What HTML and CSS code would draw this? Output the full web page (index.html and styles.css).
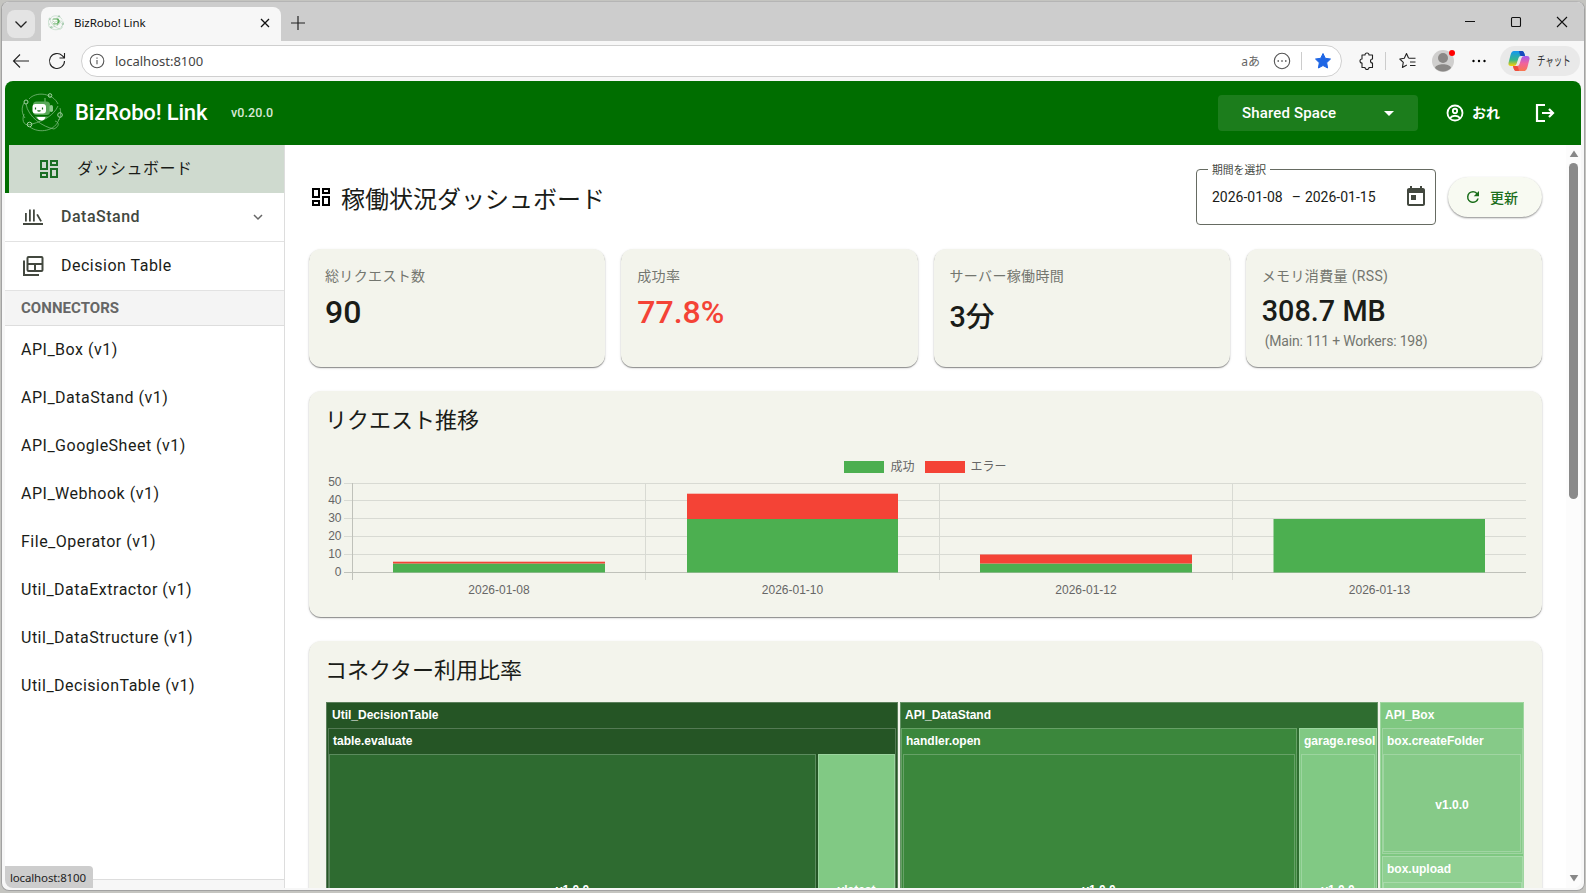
FILE: index.html
```html
<!DOCTYPE html>
<html lang="ja">
<head>
  <meta charset="UTF-8" />
  <meta name="viewport" content="width=device-width, initial-scale=1.0"/>
  <title>BizRobo! Link</title>
  <link rel="stylesheet" href="styles.css">
</head>

<body>

<!-- Shared icon shapes -->
<svg class="defs" width="0" height="0">
  <symbol id="i-dash" viewBox="0 0 24 24"><path d="M19 5v2h-4V5h4M9 5v6H5V5h4m10 8v6h-4v-6h4M9 17v2H5v-2h4M21 3h-8v6h8V3zM11 3H3v10h8V3zm10 8h-8v10h8V11zm-10 4H3v6h8v-6z"/></symbol>
  <symbol id="i-robot" viewBox="0 0 42 42">
    <g fill="none" stroke="currentColor" stroke-width=".8" opacity=".75">
      <path d="M8 7C15-1 32 1 37 12M38 27C35 39 18 42 9 35M3 11C0 16 1 22 4 26"/>
      <path d="M5 12C7 25 22 35 33 37c6-3 5-7 1-8M3 22c-3 8 1 13 8 10 12-3 22-9 26-18"/>
      <path d="M39 16c1 3 1 8-1 12"/>
    </g>
    <g fill="none" stroke="currentColor" stroke-width="1">
      <circle cx="29" cy="3.500" r="1.800"/><circle cx="5" cy="10" r="2"/><circle cx="39" cy="23" r="2.300"/><circle cx="8.500" cy="32.500" r="2.300"/>
    </g>
    <path d="M24 6v5" stroke="#7fbf7f" stroke-width="1"/>
    <rect x="12" y="9.500" width="17" height="13.500" rx="3.500" fill="#58a858"/>
    <rect x="28.500" y="13" width="3.500" height="7" rx="1.700" fill="#8cc78c"/>
    <rect x="11.500" y="12" width="13.500" height="9.500" rx="3" fill="#fff"/>
    <path d="M14.500 15.500v2M21.500 15.500v2M16.500 18.500q1.500 1.200 3 0" stroke="#176817" stroke-width="1.200" fill="none"/>
    <path d="M14 24.500h13l-2 2.500H16z" fill="#58a858"/>
    <path d="M16 25h8.500q-1 3.500-4.200 3.500T16 25z" fill="#fff"/>
  </symbol>
</svg>

<div class="window">

  <!-- Tab strip -->
  <div class="tabstrip">
    <button class="tab-menu"><svg width="14" height="14" viewBox="0 0 14 14"><path d="M1.500 4.500 7 10l5.500-5.500"/></svg></button>
    <div class="tab">
      <svg class="favicon" width="16" height="16"><use href="#i-robot"/></svg>
      <span class="tab-title">BizRobo! Link</span>
      <svg class="line" width="10" height="10" viewBox="0 0 10 10"><path d="M1 1l8 8M9 1L1 9"/></svg>
    </div>
    <svg class="line new-tab" width="14" height="14" viewBox="0 0 14 14"><path d="M7 0v14M0 7h14"/></svg>
    <div class="win-buttons">
      <svg class="line" width="12" height="12" viewBox="0 0 12 12"><path d="M1 5.500h10"/></svg>
      <svg class="line" width="12" height="12" viewBox="0 0 12 12"><rect x="1.500" y="1.500" width="9" height="9" rx="1"/></svg>
      <svg class="line" width="12" height="12" viewBox="0 0 12 12"><path d="M1 1l10 10M11 1L1 11"/></svg>
    </div>
  </div>

  <!-- Address bar -->
  <div class="toolbar">
    <svg class="line" width="18" height="16" viewBox="0 0 18 16"><path d="M17 8H1.500M8 1.500 1.500 8 8 14.500"/></svg>
    <svg class="line reload" width="18" height="18" viewBox="0 0 18 18"><path d="M16.500 9A7.500 7.500 0 1 1 14.200 3.600L16 5.300M16.500 1v5h-5"/></svg>
    <div class="address">
      <svg class="line info" width="16" height="16" viewBox="0 0 16 16"><circle cx="8" cy="8" r="6.800"/><path d="M8 7v4.300M8 4.500v1.300"/></svg>
      <span class="url">localhost:8100</span>
      <span class="translate">aあ</span>
      <svg class="line more" width="18" height="18" viewBox="0 0 18 18"><circle cx="9" cy="9" r="7.700"/><path d="M4.500 9h1.500M8.250 9h1.500M12 9h1.500" stroke-width="1.500"/></svg>
      <span class="bar"></span>
      <svg width="18" height="18" viewBox="0 0 18 18"><path d="M9 1.500l2.300 4.800 5.200.7-3.800 3.700.9 5.300L9 13.500 4.400 16l.9-5.300L1.500 7l5.200-.7z" fill="#1f66e5" stroke="#1f66e5" stroke-linejoin="round"/></svg>
    </div>
    <svg class="line ext" width="18" height="18" viewBox="0 0 18 18"><path d="M4 3h3a2 2 0 0 1 4 0h3.500v4a1.800 1.800 0 1 0 0 4v4.500H11a2 2 0 0 1-4 0H4V11a2 2 0 0 1 0-4z" stroke-linejoin="round"/></svg>
    <span class="bar"></span>
    <svg class="line fav" width="18" height="18" viewBox="0 0 18 18"><path d="M9.500 6 7.500 1.500 5.300 6.300.8 7l3.500 3.400-.9 5 4.400-2.300M9.500 6.300h7M11 10h5.500M11 13.500h5.500" stroke-linejoin="round"/></svg>
    <div class="avatar">
      <svg width="22" height="22" viewBox="0 0 22 22"><circle cx="11" cy="11" r="11" fill="#d0cfce"/><circle cx="11" cy="8" r="5" fill="#8a8886"/><path d="M3 18c1-5 15-5 16 0a11 11 0 0 1-16 0z" fill="#8a8886"/></svg>
      <span class="dot"></span>
    </div>
    <svg class="dots" width="14" height="4" viewBox="0 0 14 4"><circle cx="1.500" cy="2" r="1.200"/><circle cx="7" cy="2" r="1.200"/><circle cx="12.500" cy="2" r="1.200"/></svg>
    <div class="chat">
      <svg width="22" height="22" viewBox="0 0 22 22">
        <defs>
          <linearGradient id="g1" x1="0" y1="0" x2="0" y2="1"><stop offset="0" stop-color="#1597f2"/><stop offset=".6" stop-color="#36b78a"/><stop offset="1" stop-color="#ffd000"/></linearGradient>
          <linearGradient id="g2" x1="0" y1="0" x2="0" y2="1"><stop offset="0" stop-color="#a55bf0"/><stop offset=".5" stop-color="#f1649b"/><stop offset="1" stop-color="#f9774f"/></linearGradient>
        </defs>
        <path d="M6 1h8q2 0 3 5h-4q-2 0-2.500 2l-2 6q-.5 2-3 2H3q-3 0-2.500-3l2-8Q3.500 1 6 1z" fill="url(#g1)"/>
        <path d="M11 1h3q2 0 3 5h-4q-1 0-2-5z" fill="#1749bd"/>
        <path d="M16 21H8q-2 0-3-5h4q2 0 2.500-2l2-6q.5-2 3-2H19q3 0 2.500 3l-2 8q-1 4-3.500 4z" fill="url(#g2)"/>
        <path d="M11 21H8q-2 0-3-5h4q1 0 2 5z" fill="#ee4d3d"/>
      </svg>
      <span>チャット</span>
    </div>
  </div>

  <!-- Web page -->
  <div class="page">
    <header class="app-header">
      <svg class="logo" width="42" height="42"><use href="#i-robot"/></svg>
      <span class="app-name">BizRobo! Link</span>
      <span class="version">v0.20.0</span>
      <button class="space"><span>Shared Space</span><svg width="10" height="5" viewBox="0 0 10 5"><path d="M0 0h10L5 5z" fill="#fff"/></svg></button>
      <svg class="account" width="20" height="20" viewBox="0 0 24 24" fill="none" stroke="#fff" stroke-width="2.200"><circle cx="12" cy="12" r="9"/><circle cx="12" cy="9.500" r="2.600"/><path d="M5.800 18.300c3-4 9.400-4 12.400 0"/></svg>
      <span class="user">おれ</span>
      <svg class="logout" width="24" height="24" viewBox="0 0 24 24" fill="none" stroke="#fff" stroke-width="2.200"><path d="M12 4H4v16h8M9 12h11M16 8l4 4-4 4"/></svg>
    </header>

    <div class="body">
      <nav class="sidebar">
        <a class="item active"><svg width="24" height="24"><use href="#i-dash"/></svg><span>ダッシュボード</span></a>
        <a class="item parent">
          <svg width="24" height="24" viewBox="0 0 24 24"><path d="M2 18h20v2H2zM4 8h1.800v8.500H4zM8 4.500h1.800v12H8zM12 4.500h1.800v12H12zM15.300 9.800l1.600-.8 4 7-1.600.8z"/></svg>
          <span>DataStand</span>
          <svg class="chevron" width="12" height="12" viewBox="0 0 12 12"><path d="M2 4l4 4 4-4"/></svg>
        </a>
        <a class="item">
          <svg class="outline" width="24" height="24" viewBox="0 0 24 24"><rect x="6.500" y="3" width="15" height="14" rx="1"/><path d="M6.500 10h15M14 10v7M3 6.500V21h15"/></svg>
          <span>Decision Table</span>
        </a>
        <div class="group-title">CONNECTORS</div>
        <a class="connector">API_Box (v1)</a>
        <a class="connector">API_DataStand (v1)</a>
        <a class="connector">API_GoogleSheet (v1)</a>
        <a class="connector">API_Webhook (v1)</a>
        <a class="connector">File_Operator (v1)</a>
        <a class="connector">Util_DataExtractor (v1)</a>
        <a class="connector">Util_DataStructure (v1)</a>
        <a class="connector">Util_DecisionTable (v1)</a>
        <div class="side-foot"></div>
      </nav>

      <main>
        <div class="title-row">
          <svg width="24" height="24"><use href="#i-dash"/></svg>
          <h1>稼働状況ダッシュボード</h1>
          <div class="date-field">
            <span class="date-label">期間を選択</span>
            <span class="from">2026-01-08</span><span class="dash">–</span><span>2026-01-15</span>
            <svg width="24" height="24" viewBox="0 0 24 24"><path d="M19 4h-1V2h-2v2H8V2H6v2H5c-1.100 0-2 .9-2 2v14c0 1.100.9 2 2 2h14c1.100 0 2-.9 2-2V6c0-1.100-.9-2-2-2zm0 16H5V9h14v11zM7 11h5v5H7z"/></svg>
          </div>
          <button class="refresh">
            <svg width="18" height="18" viewBox="0 0 24 24"><path d="M17.650 6.350A7.960 7.960 0 0 0 12 4a8 8 0 1 0 7.730 10h-2.080A6 6 0 1 1 12 6c1.660 0 3.140.69 4.220 1.780L13 11h7V4l-2.350 2.350z"/></svg>更新
          </button>
        </div>

        <section class="cards">
          <div class="card"><p class="label">総リクエスト数</p><p class="value big">90</p></div>
          <div class="card"><p class="label">成功率</p><p class="value big bad">77.8%</p></div>
          <div class="card"><p class="label">サーバー稼働時間</p><p class="value jp">3分</p></div>
          <div class="card"><p class="label">メモリ消費量 (RSS)</p><p class="value">308.7 MB</p><p class="note">(Main: 111 + Workers: 198)</p></div>
        </section>

        <section class="panel chart-panel">
          <h2>リクエスト推移</h2>
          <div class="legend">
            <i class="ok"></i><span>成功</span><i class="err"></i><span>エラー</span>
          </div>
          <svg class="chart" width="1200" height="124" viewBox="326 476 1200 124">
            <g class="grid">
              <path d="M344 483.500H1526M344 500.500H1526M344 518.500H1526M344 536.500H1526M344 554.500H1526"/>
              <path d="M645.500 483v97M939.500 483v97M1232.500 483v97"/>
            </g>
            <path class="axis" d="M352.500 483v97M344 572.500H1526"/>
            <g class="bar-ok">
              <rect x="393" y="563.500" width="212" height="9"/>
              <rect x="687" y="519" width="211" height="53.500"/>
              <rect x="980" y="563.500" width="212" height="9"/>
              <rect x="1273.500" y="519" width="211.500" height="53.500"/>
            </g>
            <g class="bar-err">
              <rect x="393" y="561.700" width="212" height="1.800"/>
              <rect x="687" y="493.700" width="211" height="25.300"/>
              <rect x="980" y="554.500" width="212" height="9"/>
            </g>
            <g class="ticks" text-anchor="end">
              <text x="341.500" y="486">50</text><text x="341.500" y="504">40</text><text x="341.500" y="522">30</text>
              <text x="341.500" y="540">20</text><text x="341.500" y="558">10</text><text x="341.500" y="576">0</text>
            </g>
            <g class="ticks" text-anchor="middle">
              <text x="499" y="594">2026-01-08</text><text x="792.500" y="594">2026-01-10</text>
              <text x="1086" y="594">2026-01-12</text><text x="1379.500" y="594">2026-01-13</text>
            </g>
          </svg>
        </section>

        <section class="panel tree-panel">
          <h2>コネクター利用比率</h2>
          <div class="treemap">
            <div class="tm tm-util">
              <b>Util_DecisionTable</b>
              <div class="tm-row">
                <div class="fn">
                  <b>table.evaluate</b>
                  <div class="leaves"><span class="leaf c-forest">v1.0.0</span><span class="leaf c-light">vlatest</span></div>
                </div>
              </div>
            </div>
            <div class="tm tm-stand">
              <b>API_DataStand</b>
              <div class="tm-row">
                <div class="fn c-mid"><b>handler.open</b><div class="leaves"><span class="leaf c-mid">v1.0.0</span></div></div>
                <div class="fn c-light"><b>garage.resol</b><div class="leaves"><span class="leaf c-light">v1.0.0</span></div></div>
              </div>
            </div>
            <div class="tm tm-box">
              <b>API_Box</b>
              <div class="fn create"><b>box.createFolder</b><div class="leaves"><span class="leaf">v1.0.0</span></div></div>
              <div class="fn upload"><b>box.upload</b><div class="leaves"><span class="leaf"></span></div></div>
            </div>
          </div>
        </section>
      </main>

      <div class="scrollbar">
        <svg width="10" height="8" viewBox="0 0 10 8"><path d="M5 .5 9.300 7H.7z"/></svg>
        <div class="thumb"></div>
        <svg class="down" width="10" height="8" viewBox="0 0 10 8"><path d="M5 7.500 9.300 1H.7z"/></svg>
      </div>
    </div>
    <div class="status">localhost:8100</div>
  </div>
</div>

</body>
</html>
```
FILE: styles.css
```css
* { box-sizing: border-box; }
body {
  margin: 0;
  height: 893px;
  overflow: hidden;
  padding: 1px 1px 2px;
  background: #c4c4c0;
  font-family: Roboto, "Noto Sans CJK JP", sans-serif;
  color: #1a1c18;
}
button { border: none; font: inherit; padding: 0; }
p, h1, h2 { margin: 0; font-weight: 400; }
.defs { position: absolute; }
.line { fill: none; stroke: #222; stroke-width: 1.1; flex: none; }

/* Browser window */
.window {
  height: 890px;
  display: flex;
  flex-direction: column;
  background: #f7f7f7;
  border: 1px solid #a2a2a2;
  border-top-color: #b5b5b5;
  border-radius: 8px;
  overflow: hidden;
  font-family: "Noto Sans", "Noto Sans CJK JP", sans-serif;
}
.tabstrip {
  height: 39px;
  flex: none;
  display: flex;
  align-items: center;
  background: #cdcdcd;
  padding-left: 5px;
}
.tab-menu {
  width: 28px;
  height: 28px;
  border-radius: 8px;
  background: #e4e4e4;
  display: grid;
  place-items: center;
  margin-top: 5px;
}
.tab-menu svg { fill: none; stroke: #222; stroke-width: 1.3; }
.tab {
  width: 240px;
  height: 34px;
  margin-left: 6px;
  align-self: flex-end;
  display: flex;
  align-items: center;
  background: #f7f7f7;
  border-radius: 8px 8px 0 0;
  padding: 0 11px 2px 7px;
}
.favicon { color: #4a9a5c; }
.tab-title { font-size: 11.5px; color: #111; margin-left: 10px; margin-top: -2px; flex: 1; letter-spacing: -.05px; }
.tab .line { stroke: #111; stroke-width: 1.3; }
.new-tab { margin-left: 10px; margin-top: 3px; stroke-width: 1.2; }
.win-buttons { margin-left: auto; display: flex; gap: 34px; padding-right: 16px; }
.win-buttons .line { stroke: #111; }

.toolbar {
  height: 40px;
  flex: none;
  display: flex;
  align-items: center;
  padding-left: 10px;
}
.reload { margin-left: 18px; }
.address {
  width: 1261px;
  height: 32px;
  margin-left: 15px;
  border: 1px solid #cfcfcf;
  border-radius: 16px;
  background: #fff;
  display: flex;
  align-items: center;
  padding: 0 9px 0 7px;
}
.address .info, .address .more { stroke: #555; }
.url { font-size: 13px; color: #444; margin-left: 10px; flex: 1; }
.translate { font-size: 12px; color: #666; margin-right: 13px; margin-top: -1px; }
.bar { width: 1px; height: 18px; background: #ccc; }
.address .bar { margin: 0 12px 0 10px; }
.ext { margin-left: 16px; margin-right: 9px; }
.fav { margin-left: 13px; }
.avatar { position: relative; height: 22px; margin-left: 15px; }
.dot { position: absolute; right: -1px; top: 0; width: 6px; height: 6px; border-radius: 50%; background: #f00; }
.dots { margin-left: 18px; }
.chat {
  width: 80px;
  height: 30px;
  margin-left: 14px;
  border-radius: 15px;
  background: #e9e9e9;
  display: flex;
  align-items: center;
  padding-left: 8px;
  gap: 7px;
  font-size: 13px;
  color: #333;
}
.chat span { white-space: nowrap; transform: scaleX(.65); transform-origin: left; margin-top: -3px; }
.chat svg { flex: none; }

/* Page area inside the window */
.page {
  position: relative;
  flex: 1;
  min-height: 0;
  margin: 0 3px;
  margin-bottom: 2px;
  border-radius: 8px;
  overflow: hidden;
  background: #fff;
  display: flex;
  flex-direction: column;
  font-family: Roboto, "Noto Sans CJK JP", sans-serif;
}
.app-header {
  height: 64px;
  flex: none;
  background: #006e00;
  color: #fff;
  display: flex;
  align-items: center;
  padding-left: 16px;
}
.logo { color: #a6d3a6; }
.app-name { font-size: 22px; font-weight: 500; letter-spacing: -.15px; margin: -2px 0 0 12px; width: 156px; }
.version { font-size: 12.500px; font-weight: 500; letter-spacing: .1px; color: #d6e8d6; margin-top: -1px; }
.space {
  width: 200px;
  height: 36px;
  margin-left: auto;
  border-radius: 4px;
  background: #1c7d1c;
  color: #fff;
  font-size: 15px;
  font-weight: 500;
  letter-spacing: .15px;
  display: flex;
  align-items: center;
  justify-content: space-between;
  padding: 0 24px;
}
.account { margin-left: 27px; }
.user { font-size: 14px; font-weight: 700; margin: -2px 0 0 7px; width: 61px; }
.logout { margin-right: 24px; }

.body { flex: 1; min-height: 0; display: flex; }

/* Sidebar */
.sidebar {
  width: 280px;
  flex: none;
  border-right: 1px solid #ddd;
  display: flex;
  flex-direction: column;
  letter-spacing: .5px;
}
.item {
  height: 49px;
  flex: none;
  display: flex;
  align-items: center;
  gap: 16px;
  padding-left: 16px;
  border-bottom: 1px solid #e2e2e2;
}
.item svg { fill: #43483f; }
.item span { margin-top: -2px; }
.item.active {
  height: 48px;
  background: #cfdacf;
  border-left: 4px solid #006e00;
  border-bottom: none;
  padding-left: 28px;
}
.item.active svg { fill: #1b6e24; }
.item.active span { margin-top: -4px; }
.item .outline { fill: none; stroke: #43483f; stroke-width: 2; }
.parent { font-weight: 500; color: #43483f; }
.item .chevron { fill: none; stroke: #666; stroke-width: 1.5; margin-left: auto; margin-right: 20px; }
.group-title {
  height: 35px;
  flex: none;
  line-height: 34px;
  background: #f4f4f4;
  border-bottom: 1px solid #ddd;
  padding-left: 16px;
  font-size: 15px;
  font-weight: 700;
  letter-spacing: .05px;
  color: #666;
}
.connector { height: 48px; flex: none; line-height: 48px; padding-left: 16px; }
.side-foot { height: 9px; margin-top: auto; background: #f7f7f7; border-top: 1px solid #ddd; }

/* Dashboard */
main { flex: 1; min-width: 0; overflow: hidden; padding: 24px 24px 0; }
.title-row { height: 56px; display: flex; align-items: center; }
.title-row h1 { font-size: 24px; margin-left: 8px; line-height: 32px; margin-top: 5px; }
.date-field {
  position: relative;
  width: 240px;
  height: 56px;
  margin-left: auto;
  border: 1px solid #666b62;
  border-radius: 4px;
  display: flex;
  align-items: center;
  padding: 0 7px 0 15px;
  font-size: 14px;
}
.date-label {
  position: absolute;
  top: -7px;
  left: 11px;
  padding: 0 4px;
  background: #fff;
  font-size: 10.800px;
  line-height: 16px;
  color: #43483f;
}
.dash { margin: 0 4px 0 9px; }
.date-field svg { fill: #43483f; margin-left: auto; margin-top: -2px; }
.refresh {
  width: 94px;
  height: 40px;
  margin-left: 12px;
  border-radius: 20px;
  background: #f8faf2;
  box-shadow: 0 1px 2px rgba(0, 0, 0, .45);
  color: #1b6e1b;
  font-size: 14px;
  font-weight: 500;
  display: flex;
  align-items: center;
  padding-left: 16px;
  gap: 8px;
}
.refresh svg { fill: #1b6e1b; }

.cards { display: grid; grid-template-columns: repeat(4, 1fr); gap: 16px; margin-top: 24px; }
.card, .panel {
  background: #f3f4ec;
  border-radius: 12px;
  box-shadow: 0 1px 1px rgba(0, 0, 0, .4), 0 1px 3px rgba(0, 0, 0, .12);
}
.card { height: 118px; padding: 16px; }
.label { font-size: 14px; line-height: 23px; letter-spacing: .35px; color: #73766f; }
.value { font-size: 28.800px; line-height: 40px; font-weight: 500; margin-top: 3px; }
.big { font-size: 32px; margin-top: 4px; }
.jp { font-size: 28.800px; margin-top: 9px; }
.bad { color: #f44336; }
.note { font-size: 14px; letter-spacing: -.2px; line-height: 20px; color: #73766f; padding-left: 3px; }

.panel { margin-top: 24px; padding: 17px 16px 0; }
.panel h2 { font-size: 22px; line-height: 26px; }
.chart-panel { height: 226px; }
.legend {
  display: flex;
  align-items: center;
  justify-content: center;
  font-size: 12px;
  line-height: 16px;
  color: #666;
  margin-top: 25px;
}
.legend i { width: 40px; height: 12px; margin-right: 6px; }
.legend span + i { margin-left: 10px; }
.ok { background: #4caf50; }
.err { background: #f44336; }
.chart { display: block; margin: 1px 0 0 1px; }
.grid path { stroke: #d8dad3; fill: none; }
.axis { stroke: #bfc1ba; fill: none; }
.bar-ok { fill: #4caf50; }
.bar-err { fill: #f44336; }
.ticks { font: 12px "Liberation Sans", Arial, sans-serif; fill: #666; }

/* Treemap */
.tree-panel { height: 420px; }
.treemap {
  display: grid;
  grid-template-columns: 572px 478px 144px;
  gap: 2px;
  height: 325px;
  margin: 18px 0 0 1px;
  font: 700 12px "Liberation Sans", Arial, sans-serif;
  color: #fff;
}
.tm { display: flex; flex-direction: column; border: 1px solid rgba(255, 255, 255, .25); min-width: 0; }
.treemap b { display: block; height: 25px; line-height: 24px; padding-left: 4px; flex: none; overflow: hidden; white-space: nowrap; }
.tm-row { flex: 1; display: grid; padding: 0 1px; gap: 2px; }
.tm-stand .tm-row { grid-template-columns: 1fr 78px; padding: 0; }
.fn { display: flex; flex-direction: column; border: 1px solid rgba(255, 255, 255, .22); min-width: 0; }
.leaves { flex: 1; display: flex; gap: 2px; }
.leaf { flex: 1; display: grid; place-items: center; border: 1px solid rgba(255, 255, 255, .22); }
.tm-util { background: #255525; }
.tm-util > b { padding-left: 5px; }
.tm-util .leaf + .leaf { flex: 0 0 77px; }
.tm-stand { background: #2f6d30; }
.tm-box { background: #7fc881; }
.c-forest { background: #2e6b30; }
.c-mid { background: #3b873c; }
.c-light { background: #81c984; }
.tm-stand .fn .leaves { padding: 0 1px; }
.tm-box .fn { margin: 0 0 2px 1px; background: #86ca88; }
.create { height: 126px; }
.create .leaves { padding: 0 1px 1px 0; }
.create .leaf { padding-top: 4px; }
.tm-box .upload { flex: 1; background: #90d092; }

/* Scrollbar */
.scrollbar {
  width: 15px;
  background: #fcfcfc;
  display: flex;
  flex-direction: column;
  align-items: center;
  padding: 5px 0 6px;
}
.scrollbar svg { fill: #888; flex: none; }
.thumb { width: 9px; height: 336px; margin-top: 5px; border-radius: 5px; background: #8a8a8a; }
.scrollbar .down { margin-top: auto; }

/* Link target shown over the page corner */
.status {
  position: absolute;
  left: 0;
  bottom: 0;
  width: 88px;
  height: 22px;
  background: #cdcdcd;
  border-radius: 0 4px 0 0;
  font: 11.500px/23px "Noto Sans", sans-serif;
  padding-left: 5px;
  color: #222;
  letter-spacing: -.15px;
}
```
